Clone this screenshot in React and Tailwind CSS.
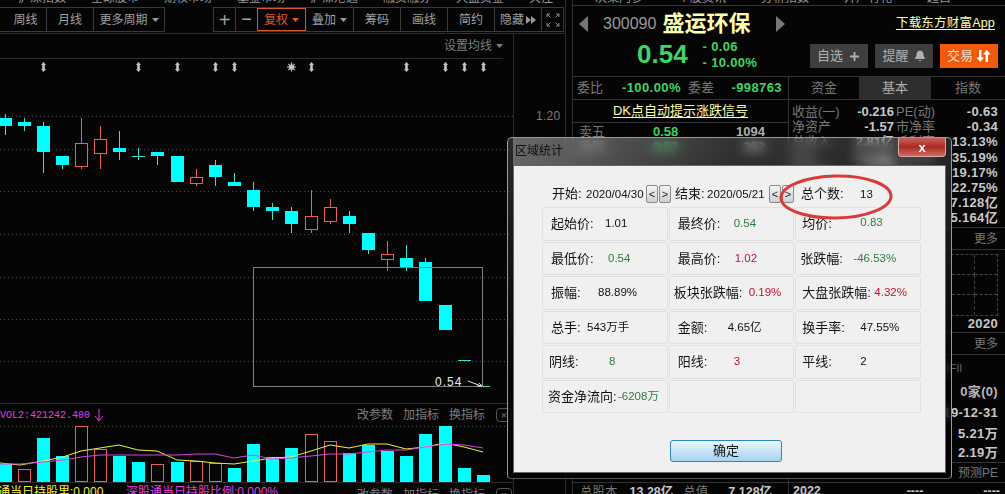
import { Bell, Plus } from 'lucide-react'

const candles = [
  [5, 114, 135, 118, 126, 0], [24.5, 118, 131, 122, 126, 0], [43.5, 122, 173, 126, 152, 0],
  [62.5, 156, 169, 156, 165, 0], [81.5, 118, 169, 143, 166, 1], [100.5, 126, 169, 139, 153, 1],
  [119.5, 131, 160, 148, 152, 0], [138.5, 148, 160, 156, 157, 0], [157.5, 152, 165, 152, 156, 0],
  [177.5, 156, 182, 156, 182, 0], [196.5, 169, 186, 177, 183, 1], [215.5, 160, 186, 165, 177, 0],
  [234.5, 173, 186, 182, 186, 0], [253.5, 182, 211, 190, 207, 0], [272.5, 203, 220, 207, 211, 0],
  [291.5, 207, 233, 211, 224, 0], [311.5, 190, 233, 216, 229, 1], [330.5, 199, 224, 207, 221, 1],
  [349.5, 211, 233, 216, 224, 0], [368.5, 233, 254, 233, 250, 0], [387.5, 241, 271, 254, 259, 1],
  [406.5, 245, 271, 258, 267, 0], [425.5, 258, 301, 262, 301, 0], [445.5, 305, 330, 305, 330, 0],
  [464.5, 360, 361, 360, 361, 0], [483.5, 386, 387, 386, 387, 0],
]

// [center x, top y, red?]
const volumes = [
  [5, 464, 0], [24.5, 469, 1], [43.5, 438, 0], [62.5, 456, 0], [81.5, 426, 1], [100.5, 449, 1],
  [119.5, 456, 0], [138.5, 462, 0], [157.5, 464, 1], [177.5, 462, 0], [196.5, 461, 1], [215.5, 463, 1],
  [234.5, 468, 0], [253.5, 444, 0], [272.5, 457, 0], [291.5, 448, 0], [311.5, 434, 1], [330.5, 441, 1],
  [349.5, 453, 0], [368.5, 445, 0], [387.5, 451, 0], [406.5, 456, 0], [425.5, 434, 0], [445.5, 426, 0],
  [464.5, 468, 0], [483.5, 475, 0],
]

const yellowLine = '0,463 20,465 43,461 63,457 81,451 100,448 119,445 138,450 157,451 177,460 196,461 215,463 234,464 253,461 272,458 291,457 311,451 330,445 349,448 368,444 387,444 406,449 425,447 445,443 464,447 483,452'
const pinkLine = '0,464 20,464 43,462 63,460 81,457 100,455 119,455 138,455 157,455 177,455 196,454 215,454 234,458 253,455 272,459 291,458 311,456 330,454 349,454 368,452 387,450 406,450 425,447 445,444 464,445 483,448'

const arrowMarks = [43.5, 138.5, 177.5, 215.5, 234.5, 311.5, 406.5, 445.5, 464.5, 483.5]

const cells = [
  { label: '起始价:', value: '1.01', pad: 'pl-2', w: 'w-[54px]', color: 'text-[#111]' },
  { label: '最终价:', value: '0.54', pad: 'pl-2', w: 'w-[56px]', color: 'text-[#2e7d3c]' },
  { label: '均价:', value: '0.83', pad: 'pl-1.5', w: 'w-[58px]', color: 'text-[#2e7d3c]', up: true },
  { label: '最低价:', value: '0.54', pad: 'pl-2', w: 'w-[57px]', color: 'text-[#2e7d3c]' },
  { label: '最高价:', value: '1.02', pad: 'pl-2', w: 'w-[57px]', color: 'text-[#c8102e]' },
  { label: '张跌幅:', value: '-46.53%', pad: 'pl-1', w: 'w-[53px]', color: 'text-[#2e7d3c]' },
  { label: '振幅:', value: '88.89%', pad: 'pl-2', w: 'w-[47px]', color: 'text-[#111]' },
  { label: '板块张跌幅:', value: '0.19%', pad: 'pl-1', w: 'w-[75px]', color: 'text-[#c8102e]' },
  { label: '大盘张跌幅:', value: '4.32%', pad: 'pl-1.5', w: 'w-[72px]', color: 'text-[#c8102e]' },
  { label: '总手:', value: '543万手', pad: 'pl-2', w: 'w-[36px]', color: 'text-[#111]' },
  { label: '金额:', value: '4.65亿', pad: 'pl-2', w: 'w-[50px]', color: 'text-[#111]' },
  { label: '换手率:', value: '47.55%', pad: 'pl-1.5', w: 'w-[58px]', color: 'text-[#111]' },
  { label: '阴线:', value: '8', pad: 'pl-1.5', w: 'w-[60px]', color: 'text-[#2e7d3c]' },
  { label: '阳线:', value: '3', pad: 'pl-2', w: 'w-[56px]', color: 'text-[#c8102e]' },
  { label: '平线:', value: '2', pad: 'pl-1.5', w: 'w-[58px]', color: 'text-[#111]' },
  { label: '资金净流向:', value: '-6208万', pad: 'pl-[5px]', w: 'w-[70px]', color: 'text-[#2e7d3c]' },
  { label: '', value: '' },
  { label: '', value: '' },
]

const rightStats = [
  ['收益(一)', '-0.216', 'PE(动)', '-0.63'],
  ['净资产', '-1.57', '市净率', '-0.34'],
  ['总收入', '2.81亿', '毛利率', '13.13%'],
  ['同比', '-8.20%', '净利率', '35.19%'],
  ['净利润', '-5.38亿', 'ROE', '19.17%'],
  ['同比', '-6.10%', '负债率', '22.75%'],
  ['总股本', '13.28亿', '总值', '7.128亿'],
  ['流通股', '9.56亿', '流值', '5.164亿'],
]

const bookRows = [
  ['卖五', '0.58', '1094'],
  ['卖四', '0.57', '352'],
]

function Caret({ className = 'text-[#999]' }) {
  return (
    <svg width="7" height="4" viewBox="0 0 7 4" className={className}>
      <path d="M0 0h7L3.5 4z" fill="currentColor" />
    </svg>
  )
}

function ToolButton({ children, className = 'w-[47px] border-r border-[#3a3a3a]' }) {
  return <div className={`flex items-center justify-center gap-1 text-[12px] text-[#a0a0a0] ${className}`}>{children}</div>
}

function Toolbar() {
  return (
    <div className="flex h-[27px] shrink-0 items-stretch justify-between border-b border-[#2c2c2c] pb-[1px]">
      <div className="flex border border-l-0 border-[#3a3a3a]">
        <ToolButton><span className="w-[1px]" />周线</ToolButton>
        <ToolButton>月线</ToolButton>
        <ToolButton className="w-[70px]">更多周期<Caret /></ToolButton>
      </div>
      <div className="mr-[1px] flex border border-[#3a3a3a]">
        <ToolButton className="w-[22px] border-r border-[#3a3a3a] text-[20px] font-light">+</ToolButton>
        <ToolButton className="w-[21px] text-[18px] font-light">−</ToolButton>
        <ToolButton className="w-[49px] border border-[#d8562a] text-[#e0562a]">复权<Caret className="text-[#e0562a]" /></ToolButton>
        <ToolButton className="w-[48px] border-r border-[#3a3a3a]">叠加<Caret /></ToolButton>
        <ToolButton>筹码</ToolButton>
        <ToolButton>画线</ToolButton>
        <ToolButton>简约</ToolButton>
        <ToolButton className="w-[47px] gap-[2px] border-r border-[#3a3a3a]">
          隐藏
          <svg width="10" height="8" viewBox="0 0 10 8" className="text-[#999]">
            <path d="M0 0l5 4-5 4zM5 0l5 4-5 4z" fill="currentColor" />
          </svg>
        </ToolButton>
        <div className="flex w-[21px] items-center justify-center">
          <svg width="14" height="14" viewBox="0 0 14 14" fill="none" stroke="#8a8a8a" strokeWidth="1">
            <path d="M1 4V1h3M1 1l3.5 3.5M10 1h3v3M13 1L9.5 4.5M1 10v3h3M1 13l3.5-3.5M13 10v3h-3M13 13L9.5 9.5" />
          </svg>
        </div>
      </div>
    </div>
  )
}

function KlineChart() {
  return (
    <svg width="513" height="344" viewBox="0 59 513 344" className="block shrink-0">
      {[116, 149, 191, 234, 277, 319, 361].map((y) => (
        <line key={y} x1="0" x2="513" y1={y + 0.5} y2={y + 0.5} stroke="#4a4a4a" strokeDasharray="1 3" />
      ))}
      {arrowMarks.map((x) => (
        <path key={x} d={`M${x} 62l2.5 3h-1.2v4h1.2l-2.5 3-2.5-3h1.2v-4h-1.2z`} fill="#c4c4c4" />
      ))}
      <g stroke="#c4c4c4" strokeWidth="1.2">
        <circle cx="291.5" cy="67" r="2.6" fill="#c4c4c4" stroke="none" />
        <path d="M291.5 62.5v9M287 67h9M288.3 63.8l6.4 6.4M294.7 63.8l-6.4 6.4" />
      </g>
      {candles.map(([x, top, bottom, bodyTop, bodyBottom, red]) => {
        const color = red ? '#e8605a' : '#00ffff'
        const left = Math.floor(x) - 6
        return (
          <g key={x}>
            <line x1={Math.floor(x) + 0.5} x2={Math.floor(x) + 0.5} y1={top} y2={bodyTop} stroke={red ? color : '#40e0d0'} />
            <line x1={Math.floor(x) + 0.5} x2={Math.floor(x) + 0.5} y1={bodyBottom} y2={bottom} stroke={red ? color : '#40e0d0'} />
            {red ? (
              <rect x={left + 0.5} y={bodyTop + 0.5} width="12" height={bodyBottom - bodyTop} fill="#050505" stroke={color} />
            ) : (
              <rect x={left} y={bodyTop} width="13" height={Math.max(bodyBottom - bodyTop, 1)} fill={bodyBottom - bodyTop < 2 ? '#40e0d0' : color} />
            )}
          </g>
        )
      })}
      <rect x="253.5" y="267.5" width="229" height="119" fill="none" stroke="#808080" />
      <text x="435" y="386" fill="#e8e8e8" fontSize="12" letterSpacing="1">0.54</text>
      <path d="M468 381l13 5M477 386h5l-3-3" stroke="#e8e8e8" fill="none" />
    </svg>
  )
}

function VolumeChart() {
  return (
    <svg width="513" height="56" viewBox="0 426 513 56" className="block shrink-0">
      <line x1="0" x2="513" y1="426.5" y2="426.5" stroke="#4a4a4a" strokeDasharray="1 3" />
      {volumes.map(([x, top, red]) => {
        const left = Math.floor(x) - 6
        return red ? (
          <rect key={x} x={left + 0.5} y={top + 0.5} width="12" height={481 - top} fill="#050505" stroke="#e8605a" />
        ) : (
          <rect key={x} x={left} y={top} width="13" height={482 - top} fill="#00ffff" />
        )
      })}
      <polyline points={yellowLine} fill="none" stroke="#f0f040" />
      <polyline points={pinkLine} fill="none" stroke="#e040e0" />
    </svg>
  )
}

function IndicatorLinks() {
  return (
    <div className="flex items-center gap-[10px] pr-[1px] text-[12px] text-[#7d7d7d]">
      <span>改参数</span>
      <span>加指标</span>
      <span>换指标</span>
      <span className="ml-[1px] flex h-[14px] w-[16px] items-center justify-center rounded-sm border border-[#555] text-[10px]">×</span>
    </div>
  )
}

function ChartPane() {
  return (
    <div className="flex w-[566px] shrink-0 flex-col border-r border-[#2c2c2c]">
      <div className="flex h-[7px] shrink-0 gap-[25px] overflow-hidden pl-[18px] text-[12px] leading-[12px] text-[#999]">
        {['沪深指数', '全球股市', '期权市场', '基金市场', '沪深港通', '融资融券', '大盘资金', '关注'].map((t) => (
          <span key={t} className="-mt-[8px] shrink-0">{t}</span>
        ))}
      </div>
      <Toolbar />
      <div className="flex min-h-0 flex-1 overflow-hidden">
        <div className="flex w-[514px] flex-col border-r border-[#2c2c2c]">
          <div className="mr-[10px] flex h-[25px] shrink-0 items-center justify-end gap-1 border-b border-[#2c2c2c] pl-2 text-[12px] text-[#7d7d7d]">
            设置均线<Caret className="text-[#7d7d7d]" />
          </div>
          <KlineChart />
          <div className="flex h-[23px] shrink-0 items-center justify-between border-t border-[#2c2c2c]">
            <div className="flex items-center gap-[4px] font-['Liberation_Mono','Noto_Sans_CJK_SC',monospace] text-[10px] text-[#e040e0]">
              VOL2:421242.400
              <svg width="10" height="13" viewBox="0 0 10 13" fill="none" stroke="#e040e0">
                <path d="M5 0v11M1 7l4 5 4-5" />
              </svg>
            </div>
            <IndicatorLinks />
          </div>
          <VolumeChart />
          <div className="flex h-[12px] shrink-0 items-start justify-between overflow-hidden border-t border-[#2c2c2c] pt-[3px]">
            <div className="flex shrink-0 text-[12px] leading-[13px]">
              <span className="-ml-[2px] w-[128px] text-[#f0f040]">通当日持股里:0.000</span>
              <span className="text-[#e040e0]">深股通当日持股比例:0.000%</span>
            </div>
            <IndicatorLinks />
          </div>
        </div>
        <div className="flex-1 pt-[75px] pl-[22px] text-[12px] leading-[14px] tracking-wide text-[#7d7d7d]">1.20</div>
      </div>
    </div>
  )
}

function QuotePane() {
  return (
    <div className="ml-[6px] flex min-w-0 flex-1 flex-col border-l border-[#333]">
      <div className="flex h-[6px] shrink-0 gap-[35px] overflow-hidden border-b border-[#333] pl-[22px] text-[12px] leading-[12px] text-[#999]">
        {['决策内参', '个股资讯', '分析指数', '开户有礼', '超自'].map((t) => (
          <span key={t} className="-mt-[8px] shrink-0">{t}</span>
        ))}
      </div>
      <div className="flex h-[71px] shrink-0 flex-col border-b border-[#333] pl-[6px] pr-[7px]">
        <div className="flex h-[35px] shrink-0 items-center">
          <svg width="10" height="16" viewBox="0 0 10 16" className="text-[#777]"><path d="M9 0v16L0 8z" fill="currentColor" /></svg>
          <span className="ml-[14px] text-[16px] text-[#9a9a9a]">300090</span>
          <span className="ml-[6px] text-[22px] font-bold text-[#ffffb0]">盛运环保</span>
          <svg width="10" height="16" viewBox="0 0 10 16" className="ml-[25px] text-[#777]"><path d="M1 0v16l9-8z" fill="currentColor" /></svg>
          <span className="mr-[3px] ml-auto text-[12.5px] tracking-[0.2px] text-[#ffffb0] underline underline-offset-2">下载东方财富App</span>
        </div>
        <div className="flex h-[35px] items-start">
          <span className="-mt-[3px] ml-[58px] text-[26px] leading-[32px] font-bold text-[#3fd464]">0.54</span>
          <div className="ml-[15px] -mt-[2px] flex flex-col text-[13px] leading-[16px] font-bold tracking-wide text-[#3fd464]">
            <span>- 0.06</span>
            <span>- 10.00%</span>
          </div>
          <div className="ml-auto flex gap-[7px] pt-[3px]">
            <div className="flex h-[24px] w-[58px] items-center justify-center gap-[5px] bg-[#3e3e3e] text-[13px] text-[#b0b0b0]">自选<Plus size={13} strokeWidth={3.5} /></div>
            <div className="flex h-[24px] w-[58px] items-center justify-center gap-[5px] bg-[#3e3e3e] text-[13px] text-[#b0b0b0]">提醒<Bell size={12} fill="currentColor" /></div>
            <div className="flex h-[24px] w-[58px] items-center justify-center gap-[3px] bg-[#ef5a0c] text-[13px] text-[#f4e0d0]">
              交易
              <svg width="15" height="12" viewBox="0 0 15 12" fill="#fff"><path d="M3 0h2.4v7.5H8L4.2 12 .4 7.5H3zM9.6 12h2.4V4.5h2.6L10.8 0 7 4.5h2.6z" /></svg>
            </div>
          </div>
        </div>
      </div>
      <div className="flex min-h-0 flex-1">
        <div className="flex w-[216px] shrink-0 flex-col border-r border-[#333]">
          <div className="flex h-[23px] shrink-0 items-center border-b border-[#333] pl-[4px] pr-[6px] text-[13px] text-[#777]">
            <span className="w-[45px]">委比</span>
            <span className="w-[66px] text-[13px] font-bold tracking-[0.4px] text-[#3fd464]">-100.00%</span>
            <span>委差</span>
            <span className="ml-auto text-[13px] font-bold tracking-[0.4px] text-[#3fd464]">-998763</span>
          </div>
          <div className="flex h-[23px] shrink-0 items-center justify-center border-b border-[#333] text-[13px] text-[#ffffb0] underline underline-offset-2">DK点自动提示涨跌信号</div>
          {bookRows.map(([name, price, qty]) => (
            <div key={name} className="flex h-[15px] shrink-0 items-center pl-[6px] pt-[3px] text-[13px] text-[#777]">
              <span className="w-[74px]">{name}</span>
              <span className="w-[48px] font-bold text-[#3fd464]">{price}</span>
              <span className="w-[64px] text-right font-bold text-[#b0b0b0]">{qty}</span>
            </div>
          ))}
          <div className="mt-auto flex h-[12px] shrink-0 items-start gap-[10px] overflow-hidden border-t border-[#333] pl-[7px] pt-[2px] text-[12.5px] leading-[14px] font-bold text-[#c8c8c8]">
            <span className="font-normal text-[#777]">总股本</span>
            <span className="ml-[2px]">13.28亿</span>
            <span className="font-normal text-[#777]">总值</span>
            <span className="ml-[10px]">7.128亿</span>
          </div>
        </div>
        <div className="flex min-w-0 flex-1 flex-col">
          <div className="flex h-[23px] shrink-0 border-b border-[#333] text-[13px] text-[#777]">
            <div className="flex w-[70px] items-center justify-center">资金</div>
            <div className="flex w-[72px] items-center justify-center bg-[#2e2e2e] text-[#b0b0b0]">基本</div>
            <div className="flex flex-1 items-center justify-center">指数</div>
          </div>
          <div className="flex h-[128px] shrink-0 flex-col border-b border-[#333] pl-[3px] pr-[7px] pt-[4px]">
            {rightStats.map(([a, b, c, d]) => (
              <div key={c} className="flex h-[15.2px] items-center text-[13px] leading-[15px] text-[#777]">
                <span className="w-[60px]">{a}</span>
                <span className="w-[42px] text-right font-bold text-[#c8c8c8]">{b}</span>
                <span className="ml-[2px]">{c}</span>
                <span className="ml-auto font-bold tracking-wide text-[#c8c8c8]">{d}</span>
              </div>
            ))}
          </div>
          <div className="flex h-[22px] shrink-0 items-center justify-end border-b border-[#333] pr-[7px] text-[12px] text-[#777]">更多</div>
          <div className="mx-[7px] mt-[4px] ml-[162px] grid h-[62px] shrink-0 grid-cols-2 grid-rows-3 border border-dashed border-[#444]">
            <span className="border-r border-b border-dashed border-[#444]" />
            <span className="border-b border-dashed border-[#444]" />
            <span className="border-r border-b border-dashed border-[#444]" />
            <span className="border-b border-dashed border-[#444]" />
            <span className="border-r border-dashed border-[#444]" />
            <span />
          </div>
          <div className="flex h-[16px] shrink-0 items-center justify-end pr-[7px] text-[13px] font-bold tracking-wide text-[#c8c8c8]">2020</div>
          <div className="flex h-[23px] shrink-0 items-center justify-end border-y border-[#333] pr-[7px] text-[12px] text-[#777]">更多</div>
          <div className="flex h-[27px] shrink-0 items-center pl-[152px] text-[11px] text-[#666]">QFII</div>
          <div className="flex h-[20px] shrink-0 items-center justify-end pr-[7px] text-[13px] font-bold tracking-wide text-[#b8b8b8]">0家(0)</div>
          <div className="flex h-[21px] shrink-0 items-center justify-end pr-[7px] text-[13px] font-bold tracking-wide text-[#c8c8c8]">2019-12-31</div>
          <div className="flex h-[21px] shrink-0 items-center justify-end pr-[7px] text-[13px] font-bold tracking-wide text-[#c8c8c8]">5.21万</div>
          <div className="flex h-[19px] shrink-0 items-center justify-end border-b border-[#333] pr-[7px] text-[13px] font-bold tracking-wide text-[#c8c8c8]">2.19万</div>
          <div className="flex h-[20px] shrink-0 items-center justify-end border-b border-[#333] pr-[7px] text-[12px] text-[#777]">预测PE</div>
          <div className="flex min-h-0 flex-1 items-start justify-between overflow-hidden pl-[4px] pr-[5px] pt-[1px] text-[12.5px] leading-[14px] font-bold text-[#c8c8c8]">
            <span>2022</span>
            <span className="ml-auto">----</span>
            <span className="ml-[60px]">----</span>
          </div>
        </div>
      </div>
    </div>
  )
}

function StepButton({ children }) {
  return (
    <span className="flex h-[18px] w-[12px] items-center justify-center rounded-[2px] border border-[#8a8a8a] bg-gradient-to-b from-[#f4f4f4] to-[#d0d0d0] text-[11px] text-[#222]">
      {children}
    </span>
  )
}

function StatsDialog() {
  return (
    <div className="absolute top-[137px] left-[507px] flex h-[342px] w-[445px] flex-col rounded-t-[5px] rounded-b-[4px] border border-[#9a9a9a] border-b-[#555] bg-gradient-to-b from-white/15 to-black/50 px-[5px] pb-[5px] backdrop-blur-[6px]">
      <div className="flex h-[27px] shrink-0 items-start justify-between bg-gradient-to-r from-white/30 via-white/5 to-transparent">
        <span className="pl-[2px] pt-[4px] text-[12px] text-[#111]">区域统计</span>
        <div className="flex h-[19px] w-[48px] items-center justify-center rounded-b-[4px] border border-t-0 border-[#d8a8a4] bg-gradient-to-b from-[#c9605a] via-[#a82a20] to-[#cf6a60] text-[13px] leading-none font-bold text-white">x</div>
      </div>
      <div className="flex flex-1 flex-col border border-[#666] bg-[#f0f0f0] text-[13px] text-[#111]">
        <div className="flex h-[41px] shrink-0 items-end pb-[4px] pl-[38px]">
          <span className="w-[34px]">开始:</span>
          <span className="w-[60px] text-[11.5px]">2020/04/30</span>
          <span className="flex gap-[1px]"><StepButton>&lt;</StepButton><StepButton>&gt;</StepButton></span>
          <span className="ml-[4px] w-[32px]">结束:</span>
          <span className="w-[62px] text-[11.5px]">2020/05/21</span>
          <span className="flex gap-[1px]"><StepButton>&lt;</StepButton><StepButton>&gt;</StepButton></span>
          <span className="ml-[7px] w-[59px]">总个数:</span>
          <span className="text-[11.5px]">13</span>
        </div>
        <div className="ml-[28px] grid w-[379px] grid-cols-3 gap-[1px]">
          {cells.map((cell, i) => (
            <div key={i} className={`flex h-[33.5px] items-center rounded-[2px] border border-[#e2e2e2] ${cell.pad ?? ''}`}>
              <span className={cell.w}>{cell.label}</span>
              <span className={`text-[11.5px] ${cell.color ?? ''} ${cell.up ? '-mt-[2px]' : ''}`}>{cell.value}</span>
            </div>
          ))}
        </div>
        <div className="mt-[27px] ml-[156px]">
          <div className="flex h-[22px] w-[112px] items-center justify-center rounded-[3px] border border-[#2f86b8] bg-gradient-to-b from-[#eef8ff] via-[#c4e4f8] to-[#a8d4f0] text-[13px] text-[#111]">确定</div>
        </div>
      </div>
    </div>
  )
}

export default function App() {
  return (
    <div className="relative flex h-[494px] w-[1005px] overflow-hidden bg-[#050505] font-['Liberation_Sans','Noto_Sans_CJK_SC',sans-serif]">
      <ChartPane />
      <QuotePane />
      <StatsDialog />
      {/* hand drawn red ring over the count field */}
      <svg width="124" height="52" viewBox="0 0 124 52" className="absolute top-[172px] left-[776px]" fill="none">
        <ellipse cx="60" cy="25" rx="55" ry="21" stroke="#d93a3a" strokeWidth="3" transform="rotate(-1 60 25)" />
      </svg>
    </div>
  )
}
